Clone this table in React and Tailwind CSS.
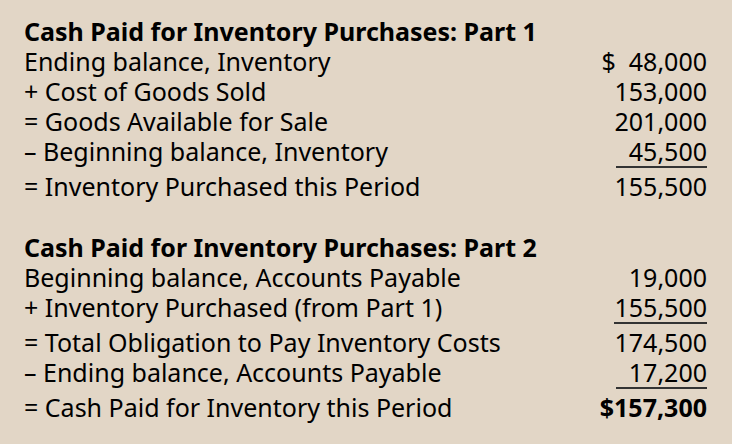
import React from 'react';

const part1 = [
    { label: 'Ending balance, Inventory', amount: '$  48,000' },
    { label: '+ Cost of Goods Sold', amount: '153,000' },
    { label: '= Goods Available for Sale', amount: '201,000' },
    { label: '– Beginning balance, Inventory', amount: '45,500', rule: true },
    { label: '= Inventory Purchased this Period', amount: '155,500', afterRule: true },
];

const part2 = [
    { label: 'Beginning balance, Accounts Payable', amount: '19,000' },
    { label: '+ Inventory Purchased (from Part 1)', amount: '155,500', rule: true },
    { label: '= Total Obligation to Pay Inventory Costs', amount: '174,500', afterRule: true },
    { label: '– Ending balance, Accounts Payable', amount: '17,200', rule: true },
    { label: '= Cash Paid for Inventory this Period', amount: '$157,300', afterRule: true, bold: true },
];

const Row = ({ row }) => (
    <div className={`flex justify-between items-start ${row.afterRule ? 'mt-[3px]' : ''}`}>
        <span className="leading-[30px] whitespace-nowrap">{row.label}</span>
        <span
            className={`min-w-[91px] text-right leading-[30px] whitespace-pre ${row.rule ? 'border-b-2 border-[#333]' : ''} ${row.bold ? 'font-bold' : ''}`}
        >
            {row.amount}
        </span>
    </div>
);

const Section = ({ title, rows }) => (
    <section>
        <h2 className="font-bold leading-[30px]">{title}</h2>
        {rows.map((row) => (
            <Row key={row.label} row={row} />
        ))}
    </section>
);

export default function App() {
    return (
        <div
            className="w-[732px] h-[444px] bg-[#e2d6c6] text-black text-[25px] pl-[24px] pr-[25px] pt-[16px] flex flex-col gap-[31px]"
            style={{ fontFamily: '"Noto Sans", sans-serif' }}
        >
            <Section title="Cash Paid for Inventory Purchases: Part 1" rows={part1} />
            <Section title="Cash Paid for Inventory Purchases: Part 2" rows={part2} />
        </div>
    );
}
